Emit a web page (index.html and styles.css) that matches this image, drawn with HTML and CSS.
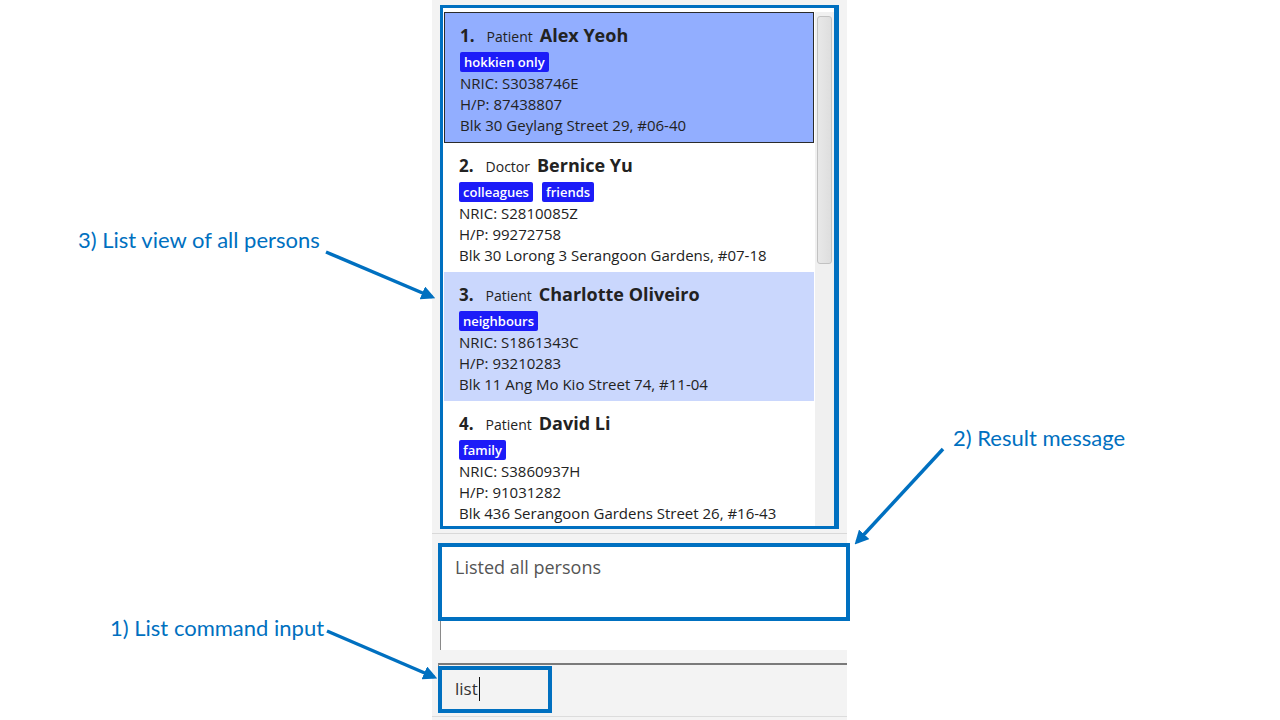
FILE: index.html
```html
<!DOCTYPE html>
<html>
<head>
    <title>Address book - list command</title>
    <link rel="stylesheet" href="styles.css">
</head>
<body>
    <div class="stage">
        <main class="app">
            <section class="list-panel">
                <ul class="person-list">
                    <li class="card selected">
                        <div class="title"><span class="index">1.</span><span class="role">Patient</span><span class="name">Alex Yeoh</span></div>
                        <div class="tags"><span class="tag">hokkien only</span></div>
                        <div class="line">NRIC: S3038746E</div>
                        <div class="line">H/P: 87438807</div>
                        <div class="line">Blk 30 Geylang Street 29, #06-40</div>
                    </li>
                    <li class="card">
                        <div class="title"><span class="index">2.</span><span class="role">Doctor</span><span class="name">Bernice Yu</span></div>
                        <div class="tags"><span class="tag">colleagues</span><span class="tag">friends</span></div>
                        <div class="line">NRIC: S2810085Z</div>
                        <div class="line">H/P: 99272758</div>
                        <div class="line">Blk 30 Lorong 3 Serangoon Gardens, #07-18</div>
                    </li>
                    <li class="card odd">
                        <div class="title"><span class="index">3.</span><span class="role">Patient</span><span class="name">Charlotte Oliveiro</span></div>
                        <div class="tags"><span class="tag">neighbours</span></div>
                        <div class="line">NRIC: S1861343C</div>
                        <div class="line">H/P: 93210283</div>
                        <div class="line">Blk 11 Ang Mo Kio Street 74, #11-04</div>
                    </li>
                    <li class="card">
                        <div class="title"><span class="index">4.</span><span class="role">Patient</span><span class="name">David Li</span></div>
                        <div class="tags"><span class="tag">family</span></div>
                        <div class="line">NRIC: S3860937H</div>
                        <div class="line">H/P: 91031282</div>
                        <div class="line">Blk 436 Serangoon Gardens Street 26, #16-43</div>
                    </li>
                </ul>
                <div class="scrollbar"><div class="thumb"></div></div>
            </section>
            <div class="divider"></div>
            <section class="result">Listed all persons</section>
            <section class="command"><span class="command-text">list</span><span class="caret"></span></section>
            <div class="bottom-line"></div>
        </main>

        <!-- annotations drawn over the screenshot -->
        <div class="mark mark-list"></div>
        <div class="mark mark-result"></div>
        <div class="mark mark-command"></div>

        <span class="note note-list">3) List view of all persons</span>
        <span class="note note-result">2) Result message</span>
        <span class="note note-command">1) List command input</span>

        <svg class="arrows" width="1280" height="720" viewBox="0 0 1280 720">
            <defs>
                <marker id="head" markerWidth="4" markerHeight="4" refX="3" refY="2" orient="auto" markerUnits="strokeWidth">
                    <path d="M0,0 L4,2 L0,4 Z" fill="#0070c0"/>
                </marker>
            </defs>
            <line x1="326" y1="252" x2="432" y2="297" stroke="#0070c0" stroke-width="3.5" marker-end="url(#head)"/>
            <line x1="943" y1="449" x2="857" y2="542" stroke="#0070c0" stroke-width="3.5" marker-end="url(#head)"/>
            <line x1="327" y1="631" x2="434" y2="677" stroke="#0070c0" stroke-width="3.5" marker-end="url(#head)"/>
        </svg>
    </div>
</body>
</html>
```

FILE: styles.css
```css
body { margin: 0; background: #fff; }
.stage { position: relative; width: 1280px; height: 720px; overflow: hidden; background: #fff; }

.app { margin-left: 432px; width: 415px; height: 720px; background: #f3f3f3; display: flex; flex-direction: column; font-family: "Open Sans", "Noto Sans", sans-serif; color: #222; }
.list-panel { margin: 5px 8px 0 8px; height: 524px; background: #fff; display: flex; overflow: hidden; box-sizing: border-box; padding: 7px 0 3px 4px; }
.person-list { list-style: none; margin: 0; padding: 0; width: 370px; overflow: hidden; }
.card { height: 119px; padding: 10px 15px 0 15px; background: #fff; }
.card.selected { background: #92aeff; border: 1px solid #2b2b2b; }
.card.odd { background: #cad7fd; }
.title { display: flex; align-items: baseline; height: 24px; line-height: 24px; }
.index { font-weight: 700; font-size: 17px; margin-right: 12px; }
.role { font-size: 14px; margin-right: 7px; }
.name { font-weight: 700; font-size: 18px; }
.tags { display: flex; gap: 9px; margin-top: 5px; height: 20px; }
.tag { background: #1c1cf8; color: #fff; font-weight: 600; font-size: 13px; line-height: 20px; padding: 0 4px; border-radius: 2px; }
.line { font-size: 15px; line-height: 21px; }
.tags + .line { margin-top: 1px; }

.scrollbar { width: 19px; margin: 0 0 0 1px; background: #f0f0f0; padding: 4px 2px; box-sizing: border-box; }
.thumb { height: 248px; border: 1px solid #c2c2c2; border-radius: 3px; background: linear-gradient(to right, #e8e8e8, #dedede); box-sizing: border-box; }

.divider { height: 1px; margin-top: 4px; background: #d9d9d9; }
.result { margin: 9px 0 0 8px; height: 107px; box-sizing: border-box; background: #fff; border-left: 1px solid #8a8a8a; padding: 12px 14px; font-size: 18px; line-height: 24px; color: #555; }
.command { margin: 13px 0 0 6px; height: 49px; box-sizing: border-box; border-top: 2px solid #7a7a7a; border-left: 1px solid #8a8a8a; background: #f3f3f3; display: flex; align-items: center; padding: 0 0 0 16px; }
.command-text { font-size: 17px; color: #333; }
.caret { width: 1px; height: 24px; background: #111; margin-left: 1px; }
.bottom-line { height: 1px; margin-top: 4px; background: #dcdcdc; }

.mark { position: absolute; border: 4px solid #0070c0; box-sizing: border-box; }
.mark-list { left: 440px; top: 5px; width: 399px; height: 524px; border-width: 3px 5px 3px 3px; }
.mark-result { left: 438px; top: 543px; width: 412px; height: 78px; }
.mark-command { left: 438px; top: 666px; width: 114px; height: 47px; }

.note { position: absolute; font-family: Lato, "Open Sans", sans-serif; font-size: 22px; line-height: 26px; color: #0070c0; white-space: nowrap; }
.note-list { left: 78px; top: 227px; }
.note-result { left: 953px; top: 425px; }
.note-command { left: 110px; top: 615px; }
.arrows { position: absolute; left: 0; top: 0; pointer-events: none; }
```
